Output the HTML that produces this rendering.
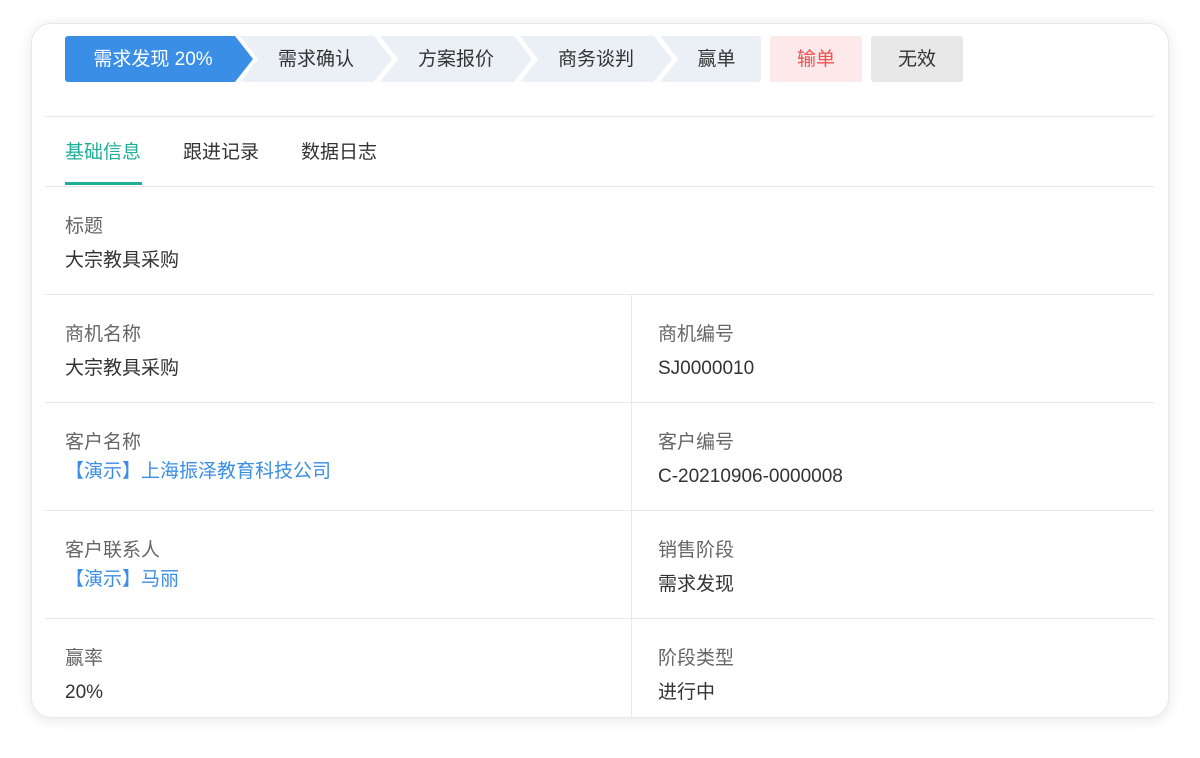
<!DOCTYPE html>
<html><head><meta charset="utf-8"><style>
*{margin:0;padding:0;box-sizing:border-box}
body{width:1200px;height:758px;background:#fff;font-family:"Liberation Sans","Noto Sans CJK SC",sans-serif;position:relative;overflow:hidden}
.card{position:absolute;left:31px;top:23px;width:1138px;height:695px;border-radius:20px;background:#fff;box-shadow:0 2px 14px rgba(0,0,0,.10);border:1px solid #e8e8ec}
.s{position:absolute;top:36px;height:46px;line-height:47px;text-align:center;font-size:19px;color:#333;background:#ebf0f7}
.a{position:absolute;font-size:19px;line-height:20px;white-space:nowrap;margin-top:3px}
.l{color:#666}.v{color:#333}.k{color:#3a8ee6}
.h{position:absolute;left:45px;width:1109px;height:1px;background:#e8e8e8}
</style></head><body>
<div class="card"></div>
<div class="s" style="left:65px;width:188px;background:#3a8ee6;color:#fff;border-radius:3px 0 0 3px;clip-path:polygon(0 0,170px 0,188px 50%,170px 100%,0 100%);padding-right:12px">需求发现 20%</div>
<div class="s" style="left:240px;width:152px;clip-path:polygon(0 0,134px 0,152px 50%,134px 100%,0 100%,18px 50%)">需求确认</div>
<div class="s" style="left:380px;width:152px;clip-path:polygon(0 0,134px 0,152px 50%,134px 100%,0 100%,18px 50%)">方案报价</div>
<div class="s" style="left:520px;width:152px;clip-path:polygon(0 0,134px 0,152px 50%,134px 100%,0 100%,18px 50%)">商务谈判</div>
<div class="s" style="left:660px;width:101px;border-radius:0 3px 3px 0;clip-path:polygon(0 0,101px 0,101px 100%,0 100%,18px 50%);padding-left:12px">赢单</div>
<div class="s" style="left:770px;width:92px;background:#fde9ea;color:#f05050;border-radius:3px">输单</div>
<div class="s" style="left:871px;width:92px;background:#e8e8e8;color:#333;border-radius:3px">无效</div>
<div class="h" style="top:116px"></div>
<div class="a" style="left:65px;top:140px;color:#1fae98">基础信息</div>
<div class="a v" style="left:183px;top:140px">跟进记录</div>
<div class="a v" style="left:301px;top:140px">数据日志</div>
<div style="position:absolute;left:65px;top:182px;width:77px;height:3px;background:#1fae98"></div>
<div class="h" style="top:186px"></div>
<div class="a l" style="left:65px;top:214px">标题</div>
<div class="a v" style="left:65px;top:248px">大宗教具采购</div>
<div class="h" style="top:294px"></div>
<div class="h" style="top:402px"></div>
<div class="h" style="top:510px"></div>
<div class="h" style="top:618px"></div>
<div style="position:absolute;left:631px;top:294px;width:1px;height:424px;background:#e8e8e8"></div>
<div class="a l" style="left:65px;top:322px">商机名称</div>
<div class="a v" style="left:65px;top:356px">大宗教具采购</div>
<div class="a l" style="left:658px;top:322px">商机编号</div>
<div class="a v" style="left:658px;top:356px">SJ0000010</div>
<div class="a l" style="left:65px;top:430px">客户名称</div>
<div class="a k" style="left:65px;top:459px">【演示】上海振泽教育科技公司</div>
<div class="a l" style="left:658px;top:430px">客户编号</div>
<div class="a v" style="left:658px;top:464px">C-20210906-0000008</div>
<div class="a l" style="left:65px;top:538px">客户联系人</div>
<div class="a k" style="left:65px;top:567px">【演示】马丽</div>
<div class="a l" style="left:658px;top:538px">销售阶段</div>
<div class="a v" style="left:658px;top:572px">需求发现</div>
<div class="a l" style="left:65px;top:646px">赢率</div>
<div class="a v" style="left:65px;top:680px">20%</div>
<div class="a l" style="left:658px;top:646px">阶段类型</div>
<div class="a v" style="left:658px;top:680px">进行中</div>
</body></html>
